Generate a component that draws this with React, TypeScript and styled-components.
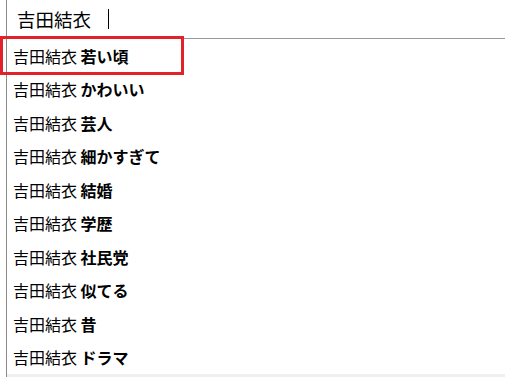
import React from "react";
import styled, { createGlobalStyle } from "styled-components";

const Global = createGlobalStyle`
  html, body { margin: 0; padding: 0; background: #ffffff; }
  body {
    font-family: "Noto Sans CJK JP", "Noto Sans", sans-serif;
    color: #000;
    overflow: hidden;
  }
`;

const Page = styled.div`
  width: 506px;
  height: 377px;
  display: flex;
  flex-direction: column;
  padding-left: 6px;
  box-sizing: border-box;
  position: relative;
`;

const Frame = styled.div`
  flex: 1;
  display: flex;
  flex-direction: column;
  border-left: 1px solid #8a8a8a;
  margin-right: 1px;
`;

const SearchBar = styled.div`
  height: 38px;
  display: flex;
  align-items: center;
  padding-left: 10px;
  border-bottom: 1px solid #9a9a9a;
  font-size: 18.5px;
  line-height: 1;
`;

const Cursor = styled.span`
  display: inline-block;
  width: 1px;
  height: 20px;
  background: #000;
  margin-left: 17px;
`;

const List = styled.ul`
  list-style: none;
  margin: 0;
  padding: 0;
  display: flex;
  flex-direction: column;
`;

const Row = styled.li`
  height: 33.5px;
  display: flex;
  align-items: center;
  padding-left: 6px;
  font-size: 16px;
  white-space: pre;
`;

const Suffix = styled.b`
  font-weight: 700;
`;

const Footer = styled.div`
  height: 3px;
  margin-top: auto;
  background: #f0f0f0;
`;

const Highlight = styled.div`
  position: absolute;
  left: 0;
  top: 36px;
  width: 184px;
  height: 39px;
  box-sizing: border-box;
  border: 3.5px solid #e2222a;
  pointer-events: none;
`;

const query = "吉田結衣";
const suggestions = ["若い頃", "かわいい", "芸人", "細かすぎて", "結婚", "学歴", "社民党", "似てる", "昔", "ドラマ"];

export default function App() {
  return (
    <>
      <Global />
      <Page>
        <Frame>
          <SearchBar>
            {query}
            <Cursor />
          </SearchBar>
          <List>
            {suggestions.map((s) => (
              <Row key={s}>
                {query} <Suffix>{s}</Suffix>
              </Row>
            ))}
          </List>
          <Footer />
        </Frame>
        <Highlight />
      </Page>
    </>
  );
}
